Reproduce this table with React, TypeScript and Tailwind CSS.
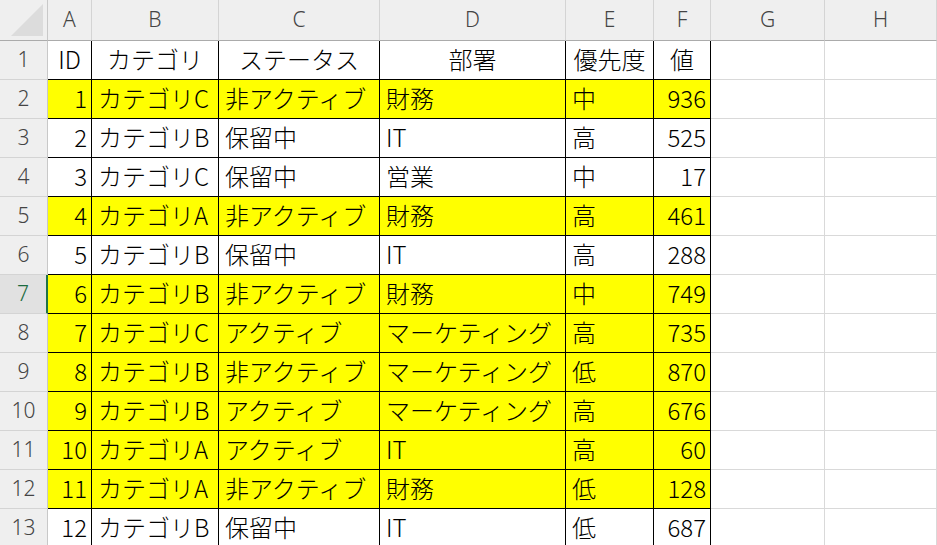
import React from "react";

const rows: [string, string, string, string, string, string, boolean][] = [
  ["1", "カテゴリC", "非アクティブ", "財務", "中", "936", true],
  ["2", "カテゴリB", "保留中", "IT", "高", "525", false],
  ["3", "カテゴリC", "保留中", "営業", "中", "17", false],
  ["4", "カテゴリA", "非アクティブ", "財務", "高", "461", true],
  ["5", "カテゴリB", "保留中", "IT", "高", "288", false],
  ["6", "カテゴリB", "非アクティブ", "財務", "中", "749", true],
  ["7", "カテゴリC", "アクティブ", "マーケティング", "高", "735", true],
  ["8", "カテゴリB", "非アクティブ", "マーケティング", "低", "870", true],
  ["9", "カテゴリB", "アクティブ", "マーケティング", "高", "676", true],
  ["10", "カテゴリA", "アクティブ", "IT", "高", "60", true],
  ["11", "カテゴリA", "非アクティブ", "財務", "低", "128", true],
  ["12", "カテゴリB", "保留中", "IT", "低", "687", false],
];

const cols = ["A", "B", "C", "D", "E", "F", "G", "H"];

const hdrFont = { fontFamily: '"Noto Sans", "Liberation Sans", sans-serif' };
const cellFont = { fontFamily: '"Noto Sans CJK JP", "Noto Sans", sans-serif' };

export default function App() {
  return (
    <div className="w-[937px] h-[545px] overflow-hidden bg-white">
      <div className="grid grid-cols-[48px_44px_127px_161px_186px_88px_57px_114px_1fr] grid-rows-[41px_repeat(13,39px)]">
        {/* corner */}
        <div className="relative bg-[#efefef] border-r border-b border-r-[#c8c8c8] border-b-[#ababab]">
          <div className="absolute right-[4px] bottom-[4px] w-0 h-0 border-l-[32px] border-l-transparent border-b-[32px] border-b-[#dcdcdc]" />
        </div>
        {cols.map((c) => (
          <div
            key={c}
            style={hdrFont}
            className="bg-[#efefef] border-r border-b border-r-[#d4d4d4] border-b-[#ababab] flex items-center justify-center text-[21px] font-light text-[#444]"
          >
            {c}
          </div>
        ))}
        {/* header data row */}
        <RowHead n={1} />
        {["ID", "カテゴリ", "ステータス", "部署", "優先度", "値"].map((t, i) => (
          <div
            key={i}
            style={cellFont}
            className="bg-white border-r border-b border-black flex items-center justify-center pb-[2px] text-[24px] font-light text-black leading-none"
          >
            {t}
          </div>
        ))}
        <Empty />
        <Empty />
        {rows.map((r, ri) => (
          <React.Fragment key={ri}>
            <RowHead n={ri + 2} selected={ri + 2 === 7} />
            {r.slice(0, 6).map((v, ci) => (
              <div
                key={ci}
                style={cellFont}
                className={`${r[6] ? "bg-[#ffff00]" : "bg-white"} border-r border-b border-black flex items-center pb-[2px] text-[24px] font-light text-black leading-none whitespace-nowrap ${
                  ci === 0 || ci === 5 ? "justify-end pr-[4px]" : "justify-start pl-[6px]"
                }`}
              >
                {v as string}
              </div>
            ))}
            <Empty />
            <Empty />
          </React.Fragment>
        ))}
      </div>
    </div>
  );
}

function Empty() {
  return <div className="bg-white border-r border-b border-[#d9d9d9]" />;
}

function RowHead({ n, selected }: { n: number; selected?: boolean }) {
  return (
    <div
      style={hdrFont}
      className={`flex items-center justify-center text-[21px] font-light border-b border-b-[#d4d4d4] ${
        selected
          ? "bg-[#e1e1e1] border-r-2 border-r-[#217346] text-[#1b6b40]"
          : "bg-[#efefef] border-r border-r-[#c8c8c8] text-[#444]"
      }`}
    >
      {n}
    </div>
  );
}
